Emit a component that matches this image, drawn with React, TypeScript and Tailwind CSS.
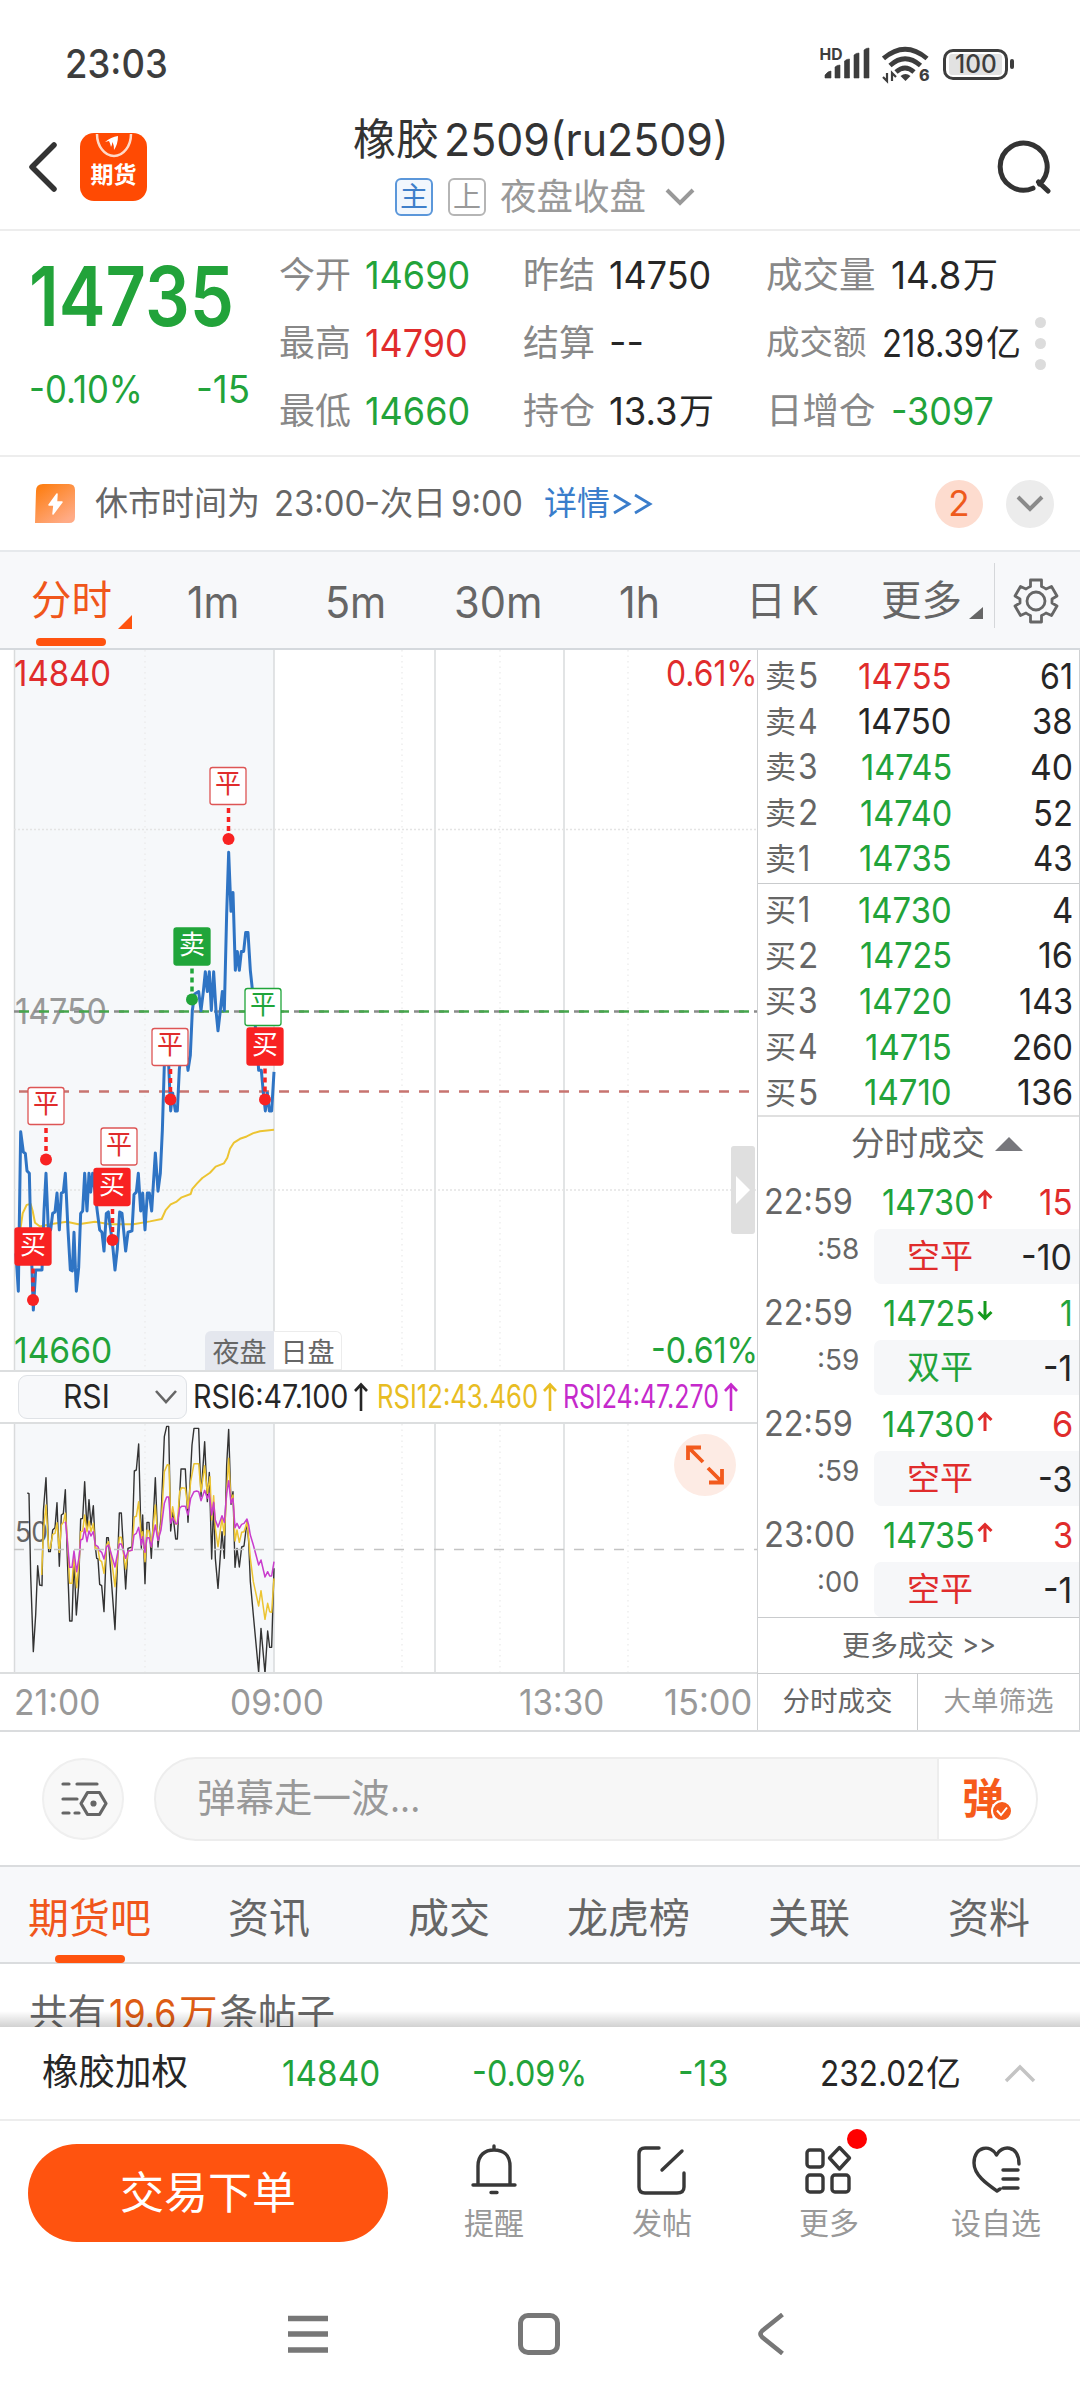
import { useLayoutEffect, useRef, useState } from "react";
import type { ReactNode } from "react";

/** Single-line text condensed or stretched to an exact width. */
function Fit({ w, className = "", children }: { w: number; className?: string; children: ReactNode }) {
  const ref = useRef<HTMLSpanElement>(null);
  const [scale, setScale] = useState(1);
  useLayoutEffect(() => {
    if (ref.current) setScale((w + 3) / ref.current.offsetWidth);
  }, [w, children]);
  return (
    <span className={`block shrink-0 ${className}`} style={{ width: w }}>
      <span
        ref={ref}
        className="block w-max origin-left whitespace-nowrap [font-feature-settings:'case']"
        style={{ transform: `translateX(-1px) scaleX(${scale})` }}
      >
        {children}
      </span>
    </span>
  );
}

const GREEN = "text-[#22a33a]";
const RED = "text-[#e02c2c]";
const DARK = "text-[#262626]";

function StatusBar() {
  return (
    <div className="flex h-[125px] items-center pl-[66px] text-[#3d3d3d]">
      <Fit w={100} className="mt-[3px] text-[40px] font-medium">23:03</Fit>
      <svg className="ml-[654px] mt-[3px]" width="54" height="36" viewBox="0 0 54 36" fill="#3d3d3d">
        <text x="-0.5" y="13.5" fontSize="16" fontWeight="700" fontFamily="Inter" textLength="23" lengthAdjust="spacingAndGlyphs">HD</text>
        <path d="M5 32v-3q3-4 6-4v7zM15 32V21q2-2 5-2v13zM24.500 32V15q2-2 5-2v19zM34 32V9q2-2 5-2v25zM44 32V4q2-2 5-2v30z" stroke="#3d3d3d" strokeWidth="0.6" />
      </svg>
      <svg className="ml-[8px] mt-[5px]" width="48" height="38" viewBox="0 0 48 38" fill="none" stroke="#3d3d3d" strokeWidth="4.800">
        <path d="M1.500 12.500Q23 -6 45 12.500M8 19.500Q23 6 38.500 19.500M14 26Q23 18 32 26" />
        <path d="M23.500 35l-5-5q5-4 10 0z" fill="#3d3d3d" stroke="none" />
        <path d="M5 27v8l-4-4M10 35v-8l4 4" strokeWidth="2.200" />
        <text x="37" y="35" fontSize="16" fontWeight="800" fontFamily="Inter" fill="#3d3d3d" stroke="none">6</text>
      </svg>
      <div className="ml-[13px] mt-[3px] flex h-[31px] w-[65px] items-center justify-center rounded-[10px] border-[3px] border-[#3d3d3d]">
        <div className="flex h-[21px] w-[53px] items-center justify-center rounded-[3px] bg-[#e2e2e2]">
          <Fit w={39} className="text-[25px] font-medium">100</Fit>
        </div>
      </div>
      <div className="ml-[2px] mt-[3px] h-[10px] w-[4px] rounded bg-[#3d3d3d]" />
    </div>
  );
}

function Header() {
  return (
    <header className="flex h-[106px] border-b-2 border-[#ededed]">
      <svg className="ml-[26px] mt-[14px]" width="34" height="56" viewBox="0 0 34 56" fill="none" stroke="#333" strokeWidth="5.500" strokeLinecap="round" strokeLinejoin="round">
        <path d="M28 6L6 28L28 50" />
      </svg>
      <div className="ml-[20px] mt-[8px] flex h-[68px] w-[67px] flex-col items-center rounded-[14px] bg-[#ff4a03]">
        <svg width="40" height="26" viewBox="0 0 40 26" fill="none">
          <path d="M3 0A17 22 0 0 0 37 0" stroke="#ffd9c8" strokeWidth="2.500" transform="translate(0 1)" />
          <path d="M11 9Q17 4 24 3Q24 11 20 17Q20 12 18.500 9Q18 12 17 14Q16 10 15 8z" fill="#fff" />
        </svg>
        <span className="mt-[5px] text-[23px] font-bold text-white">期货</span>
      </div>
      <div className="ml-[206px] flex w-[374px] flex-col">
        <div className="-mt-[4px] flex h-[40px] items-center pb-[4px] text-[43px] text-[#333]">
          <span>橡胶</span>
          <Fit w={282} className="ml-[6px] text-[45px]">2509(ru2509)</Fit>
        </div>
        <div className="ml-[42px] mt-[17px] flex h-[38px] items-center">
          <div className="flex size-[38px] items-center justify-center rounded-[6px] border-2 border-[#5b97da] bg-[#f2f7fd] text-[28px] text-[#3f7fca]">主</div>
          <div className="ml-[15px] flex size-[38px] items-center justify-center rounded-[6px] border-2 border-[#b5b5b5] text-[28px] text-[#999]">上</div>
          <span className="ml-[14px] whitespace-nowrap text-[36.500px] text-[#999]">夜盘收盘</span>
          <svg className="ml-[18px] shrink-0" width="32" height="20" viewBox="0 0 32 20" fill="none" stroke="#999" strokeWidth="4">
            <path d="M3 3L16 16L29 3" />
          </svg>
        </div>
      </div>
      <svg className="ml-[269px] mt-[14px]" width="58" height="58" viewBox="0 0 58 58" fill="none" stroke="#333" strokeWidth="5" strokeLinecap="round">
        <path d="M37 49.200A23.500 23.500 0 1 1 43.500 45M42.500 43L52 52" />
      </svg>
    </header>
  );
}

type Stat = { label: string; w: number; value: string; unit?: string; tone: string };
const STATS: Stat[][] = [
  [
    { label: "今开", value: "14690", w: 102, tone: GREEN },
    { label: "昨结", value: "14750", w: 99, tone: DARK },
    { label: "成交量", value: "14.8", unit: "万", w: 67, tone: DARK },
  ],
  [
    { label: "最高", value: "14790", w: 100, tone: RED },
    { label: "结算", value: "--", w: 32, tone: DARK },
    { label: "成交额", value: "218.39", unit: "亿", w: 99, tone: DARK },
  ],
  [
    { label: "最低", value: "14660", w: 102, tone: GREEN },
    { label: "持仓", value: "13.3", unit: "万", w: 65, tone: DARK },
    { label: "日增仓", value: "-3097", w: 100, tone: GREEN },
  ],
];

function Quote() {
  return (
    <section className="flex h-[226px] border-b-2 border-[#ededed]">
      <div className="ml-[30px] w-[249px]">
        <Fit w={202} className={`mt-[25px] text-[82px] font-semibold ${GREEN}`}>14735</Fit>
        <div className={`mt-[32px] flex text-[38px] ${GREEN}`}>
          <Fit w={111}>-0.10%</Fit>
          <Fit w={51} className="ml-[56px]">-15</Fit>
        </div>
      </div>
      <div className="mt-[10px] w-[750px]">
        {STATS.map((row, r) => (
          <div key={r} className="grid h-[68px] grid-cols-[244px_243px_1fr]">
            {row.map((s, c) => (
              <div key={s.label} className="flex items-center whitespace-nowrap">
                <span className={`text-[#888] ${r === 1 && c === 2 ? "w-[117px] text-[33.500px]" : c === 2 ? "w-[126px] text-[36.500px]" : "w-[87px] text-[36px]"}`}>
                  {s.label}
                </span>
                <Fit w={s.w} className={`text-[38px] ${s.tone}`}>{s.value}</Fit>
                {s.unit && <span className={`ml-[4px] text-[35px] ${s.tone}`}>{s.unit}</span>}
              </div>
            ))}
          </div>
        ))}
      </div>
      <div className="ml-[6px] mt-[86px] flex flex-col gap-[10px]">
        <i className="size-[11px] rounded-full bg-[#dcdcdc]" />
        <i className="size-[11px] rounded-full bg-[#dcdcdc]" />
        <i className="size-[11px] rounded-full bg-[#dcdcdc]" />
      </div>
    </section>
  );
}

function Notice() {
  return (
    <section className="flex h-[95px] items-center border-b-2 border-[#e6e9ec] pl-[35px] text-[33px] text-[#666]">
      <svg width="40" height="39" viewBox="0 0 40 39">
        <defs>
          <linearGradient id="bolt" x1="0" y1="0" x2="0.700" y2="1">
            <stop offset="0" stopColor="#fd7a08" />
            <stop offset="1" stopColor="#ffab86" />
          </linearGradient>
        </defs>
        <path d="M8 0H34Q40 0 40 6V33Q40 39 34 39H0L1 7Q1 0 8 0z" fill="url(#bolt)" />
        <path d="M22 10L14 21H19L18 30L27 18H21.500z" fill="#fff" stroke="#fff" strokeWidth="1.500" strokeLinejoin="round" />
      </svg>
      <span className="ml-[20px]">休市时间为</span>
      <Fit w={88} className="ml-[15px] text-[35px]">23:00</Fit>
      <Fit w={13} className="ml-[2px]">-</Fit>
      <span className="ml-[2px]">次日</span>
      <Fit w={69} className="ml-[6px] text-[35px]">9:00</Fit>
      <span className="ml-[23px] text-[#3a7dcb]">详情</span>
      <svg className="ml-[3px]" width="40" height="26" viewBox="0 0 40 26" fill="none" stroke="#3a7dcb" strokeWidth="2.800">
        <path d="M1 4L16 13L1 22M22 4L37 13L22 22" />
      </svg>
      <div className="ml-[282px] flex size-[48px] items-center justify-center rounded-full bg-[#fddccf] text-[35px] text-[#ee5a1c]">2</div>
      <div className="ml-[23px] flex size-[48px] items-center justify-center rounded-full bg-[#ececec]">
        <svg width="28" height="18" viewBox="0 0 28 18" fill="none" stroke="#8a8a8a" strokeWidth="4">
          <path d="M2 2L14 14L26 2" />
        </svg>
      </div>
    </section>
  );
}

function PeriodTabs() {
  return (
    <nav className="flex h-[98px] border-b-2 border-[#d5d9dd] bg-[#f7f8fa] text-[44px] text-[#666]">
      <div className="relative ml-[31px] w-[101px] pt-[29px] text-[40.500px] text-[#f0561b]">
        分时
        <svg className="absolute left-[87px] top-[63px]" width="14" height="14">
          <path d="M14 0V14H0z" fill="#ff530f" />
        </svg>
        <div className="absolute left-[5px] top-[86px] h-[8px] w-[70px] rounded bg-[#ff530f]" />
      </div>
      <Fit w={49} className="ml-[56px] pt-[28px]">1m</Fit>
      <Fit w={58} className="ml-[89px] pt-[28px]">5m</Fit>
      <Fit w={85} className="ml-[71px] pt-[28px]">30m</Fit>
      <Fit w={38} className="ml-[80px] pt-[28px]">1h</Fit>
      <span className="ml-[88px] pt-[29px] text-[40px]">日</span>
      <Fit w={25} className="ml-[6px] pt-[29px] text-[40px]">K</Fit>
      <span className="ml-[64px] pt-[29px] text-[40.500px]">更多</span>
      <svg className="ml-[7px] mt-[55px]" width="14" height="12">
        <path d="M14 0V12H0z" fill="#666" />
      </svg>
      <div className="ml-[11px] mt-[11px] h-[65px] w-px bg-[#d5d7da]" />
      <svg className="ml-[18px] mt-[26px]" width="46" height="46" viewBox="-23 -23 46 46" fill="none" stroke="#666" strokeWidth="2.800" strokeLinejoin="round">
        <circle r="9" />
        <path d="M-5.500 -21H5.500V-14.500Q8 -13.500 10 -12L15.500 -14.500L21 -5L16 -2V2L21 5L15.500 14.500L10 12Q8 13.500 5.500 14.500V21H-5.500V14.500Q-8 13.500 -10 12L-15.500 14.500L-21 5L-16 2V-2L-21 -5L-15.500 -14.500L-10 -12Q-8 -13.500 -5.500 -14.500z" />
      </svg>
    </nav>
  );
}

const PRICE =
  "48,1300 55,1380 62,1042 70,1085 76,1088 81,1125 88,1130 92,1250 100,1420 107,1335 126,1335 132,1210 138,1130 145,1250 152,1250 158,1215 165,1212 171,1172 178,1250 184,1172 190,1170 196,1130 204,1250 211,1335 217,1337 222,1255 229,1380 236,1330 242,1215 248,1210 254,1130 261,1210 267,1130 272,1170 278,1130 285,1170 292,1212 299,1250 306,1255 312,1295 319,1215 325,1212 333,1255 339,1290 345,1335 352,1290 359,1212 366,1215 377,1295 384,1255 396,1252 402,1175 409,1170 415,1130 422,1210 428,1172 435,1250 442,1172 448,1172 455,1210 466,1087 474,1168 481,1130 487,1040 493,900 500,850 506,900 512,998 518,960 526,998 532,998 538,910 545,870 552,850 558,870 564,912 571,880 577,785 584,750 596,745 603,785 610,745 616,703 622,745 628,703 634,785 641,703 648,785 654,828 661,785 667,745 673,785 680,580 686,450 693,575 699,535 706,700 712,660 718,700 724,660 731,660 737,620 744,620 751,700 757,740 765,810 772,870 776,912 784,912 790,960 796,998 802,960 808,998 815,998 822,915";
const AVERAGE =
  "50,1330 60,1255 68,1215 80,1197 92,1195 98,1210 105,1235 120,1243 150,1238 200,1233 235,1238 285,1233 330,1238 400,1238 450,1232 485,1227 497,1208 512,1196 530,1190 545,1181 572,1174 577,1163 592,1151 607,1140 630,1129 647,1116 672,1109 682,1097 690,1078 702,1065 720,1057 740,1052 760,1045 780,1041 822,1038";
const RSI6 =
  "82,234 87,236 92,480 100,710 107,600 113,452 119,510 126,512 130,290 138,188 146,410 151,410 158,345 165,338 171,263 178,454 184,300 190,296 196,224 202,430 209,618 216,618 222,430 229,600 236,510 242,312 248,310 254,200 261,345 267,254 273,330 280,272 286,395 290,430 294,432 299,508 305,512 312,590 320,368 325,368 330,440 345,644 358,294 364,294 377,522 384,400 396,396 403,168 409,165 416,87 424,400 428,300 435,506 441,322 447,322 454,430 466,188 474,396 483,310 493,65 500,34 506,34 512,348 518,290 527,372 532,372 543,162 556,162 564,322 576,90 582,40 596,40 603,245 614,80 622,260 628,172 635,432 641,265 646,430 654,520 666,350 673,430 680,150 686,43 693,268 699,230 705,457 711,400 718,456 725,396 732,393 741,320 746,380 751,500 760,600 776,772 783,640 795,775 803,648 809,697 815,697 822,460";
const RSI12 =
  "125,480 130,350 138,270 146,400 151,400 158,358 165,355 171,323 178,412 184,330 190,322 196,295 202,370 209,505 216,505 222,420 230,518 238,430 242,350 248,348 254,300 261,350 267,318 273,350 280,325 286,400 294,400 299,435 305,440 312,475 320,390 325,380 330,400 345,515 358,367 364,367 377,462 384,410 396,405 403,306 409,304 416,260 424,370 428,350 435,440 441,346 447,348 454,396 466,270 474,376 483,330 493,170 502,149 507,150 512,320 518,275 527,327 532,327 539,230 545,218 556,220 564,280 572,200 582,146 596,146 603,230 614,152 622,235 630,185 635,315 641,242 646,340 654,395 666,310 673,360 680,230 686,130 693,262 699,240 705,378 711,345 718,382 725,352 732,350 741,322 746,370 751,430 760,500 776,573 783,527 795,613 803,565 809,590 815,592 822,490";
const RSI24 =
  "194,325 197,322 209,457 216,457 222,408 230,470 238,420 242,375 248,372 254,340 261,380 267,348 273,363 280,350 286,390 294,395 299,407 305,412 312,432 320,395 326,390 345,456 358,387 364,387 377,430 384,408 396,406 402,360 409,355 416,337 424,390 428,365 435,412 441,368 447,368 454,395 466,330 474,376 483,345 493,265 500,246 506,246 512,325 518,308 527,326 532,326 539,280 545,274 556,274 564,300 572,250 582,230 590,228 596,230 603,257 614,226 622,250 628,235 635,300 641,262 646,315 654,336 666,302 673,322 680,235 686,197 693,265 699,250 705,338 711,325 718,340 725,328 732,325 741,312 746,330 751,360 760,390 776,450 783,435 795,486 803,470 809,483 815,483 822,440";

type Mark = { text: string; x: number; y: number; color: string; solid: boolean; dotX?: number; dotY?: number };
const R = "#f82222";
const MARKS: Mark[] = [
  { text: "平", x: 228, y: 117, color: R, solid: false, dotX: 228.5, dotY: 189 },
  { text: "卖", x: 192, y: 277.5, color: "#20a53a", solid: true, dotX: 192, dotY: 349.500 },
  { text: "平", x: 263, y: 338, color: "#20a53a", solid: false },
  { text: "平", x: 170, y: 378, color: R, solid: false, dotX: 170.5, dotY: 449.500 },
  { text: "买", x: 265, y: 377.5, color: R, solid: true, dotX: 265, dotY: 449.500 },
  { text: "平", x: 46, y: 437, color: R, solid: false, dotX: 46, dotY: 509.500 },
  { text: "平", x: 119, y: 477.5, color: R, solid: false },
  { text: "买", x: 112, y: 518, color: R, solid: true, dotX: 112.5, dotY: 590 },
  { text: "买", x: 33, y: 577.5, color: R, solid: true, dotX: 33, dotY: 650 },
];

function Grid({ h }: { h: number }) {
  return (
    <>
      <rect x="14" y="0" width="260" height={h} fill="#f6f8fa" />
      {[145, 402, 500, 628].map((x) => (
        <line key={x} x1={x} x2={x} y1="0" y2={h} stroke="#e9e9e9" strokeWidth="1.200" strokeDasharray="1.500 4" />
      ))}
      {[14.5, 274, 435, 564].map((x) => (
        <line key={x} x1={x} x2={x} y1="0" y2={h} stroke="#d9dbdc" strokeWidth="1.500" />
      ))}
    </>
  );
}

function PriceChart() {
  return (
    <div className="relative h-[722px] w-[757px] border-b-2 border-[#dcdedf]">
      <svg className="block" width="757" height="720" viewBox="0 0 757 720">
        <Grid h={720} />
        <path d="M14 179.500H757M14 540H757" stroke="#e4e4e4" strokeWidth="1.500" strokeDasharray="2 2" />
        <text x="15" y="374" fontSize="36" fontFamily="Inter" fill="#999" textLength="92" lengthAdjust="spacingAndGlyphs">14750</text>
        <path d="M14 361.500H757" stroke="#8c8c8c" strokeWidth="2.500" strokeDasharray="10 10" />
        <path d="M19 361.500H757" stroke="#46a64c" strokeWidth="2.500" strokeDasharray="10 10" />
        <path d="M19 441.500H757" stroke="#c87470" strokeWidth="2.500" strokeDasharray="10 10" />
        <g transform="translate(0 -10) scale(0.33333 0.4719)" fill="none" strokeLinejoin="round">
          <polyline points={AVERAGE} stroke="#ecc432" strokeWidth="2" vectorEffect="non-scaling-stroke" />
          <polyline points={PRICE} stroke="#2f74c4" strokeWidth="3" vectorEffect="non-scaling-stroke" />
        </g>
        {MARKS.filter((m) => m.dotX).map((m, i) => (
          <g key={i}>
            <line x1={m.dotX} x2={m.dotX} y1={m.y + 41} y2={m.dotY} stroke={m.color} strokeWidth="3.500" strokeDasharray="5 4" />
            <circle cx={m.dotX} cy={m.dotY} r="6" fill={m.color} />
          </g>
        ))}
        {MARKS.map((m, i) => (
          <g key={i}>
            <rect x={m.x - 18} y={m.y + 0.5} width="36" height="37" rx="2.500" fill={m.solid ? m.color : "#fff"} stroke={m.solid ? m.color : m.color === R ? "#dd5555" : m.color} strokeWidth="1.300" />
            <text x={m.x} y={m.y + 26} textAnchor="middle" fontSize="26" fontFamily="'Noto Sans CJK SC'" fill={m.solid ? "#fff" : m.color === R ? "#e02c2c" : m.color}>
              {m.text}
            </text>
          </g>
        ))}
      </svg>
      <Fit w={94} className={`absolute left-[15px] top-[5px] text-[36px] ${RED}`}>14840</Fit>
      <Fit w={89} className={`absolute left-[667px] top-[5px] text-[36px] ${RED}`}>0.61%</Fit>
      <Fit w={95} className={`absolute left-[15px] top-[682px] text-[36px] ${GREEN}`}>14660</Fit>
      <Fit w={104} className={`absolute left-[652px] top-[682px] text-[36px] ${GREEN}`}>-0.61%</Fit>
      <div className="absolute bottom-0 left-[205px] flex h-[39px] text-[27px] text-[#666]">
        <div className="flex w-[69px] items-center justify-center rounded-tl-[6px] bg-[#e4e7ee] pt-[3px]">夜盘</div>
        <div className="flex w-[68px] items-center justify-center rounded-tr-[6px] border border-l-0 border-[#ececec] bg-white pt-[3px]">日盘</div>
      </div>
      <div className="absolute left-[731px] top-[496px] flex h-[88px] w-[24px] items-center justify-center rounded-[3px] bg-[#dfdfdf]">
        <svg width="14" height="28">
          <path d="M0 0L14 14L0 28z" fill="#fff" />
        </svg>
      </div>
    </div>
  );
}

function UpArrow({ color }: { color: string }) {
  return (
    <svg width="14" height="30" viewBox="0 0 14 30" fill="none" stroke={color} strokeWidth="2.600">
      <path d="M7 29V3M1 9L7 2.500L13 9" />
    </svg>
  );
}

function RsiChart() {
  return (
    <>
      <div className="flex h-[52px] w-[757px] items-center border-b-2 border-[#dcdedf] text-[32px] text-[#262626]">
        <div className="ml-[18px] flex h-[44px] w-[169px] items-center rounded-[9px] border-[1.500px] border-[#dfe2e6] bg-[#f7f8fa] pl-[45px]">
          <Fit w={44}>RSI</Fit>
          <svg className="ml-[47px]" width="22" height="16" viewBox="0 0 22 16" fill="none" stroke="#666" strokeWidth="2.600">
            <path d="M1 2L11 13L21 2" />
          </svg>
        </div>
        <Fit w={152} className="ml-[7px]">RSI6:47.100</Fit>
        <span className="ml-[8px]"><UpArrow color="#262626" /></span>
        <Fit w={158} className="ml-[10px] text-[#e8bd22]">RSI12:43.460</Fit>
        <span className="ml-[7px]"><UpArrow color="#e8bd22" /></span>
        <Fit w={153} className="ml-[7px] text-[#c529cb]">RSI24:47.270</Fit>
        <span className="ml-[7px]"><UpArrow color="#c529cb" /></span>
      </div>
      <div className="relative h-[250px] w-[757px] border-b-2 border-[#dcdedf]">
        <svg className="block" width="757" height="248" viewBox="0 0 757 248">
          <Grid h={248} />
          <text x="15" y="118" fontSize="28" fontFamily="Inter" fill="#666" textLength="33" lengthAdjust="spacingAndGlyphs">50</text>
          <g transform="translate(0 -9) scale(0.33333)" fill="none" strokeLinejoin="round">
            <polyline points={RSI6} stroke="#333" strokeWidth="1.400" vectorEffect="non-scaling-stroke" />
            <polyline points={RSI12} stroke="#ecc432" strokeWidth="1.500" vectorEffect="non-scaling-stroke" />
            <polyline points={RSI24} stroke="#c93ccd" strokeWidth="1.500" vectorEffect="non-scaling-stroke" />
          </g>
          <path d="M14 125.500H757" stroke="#c4c4c4" strokeWidth="1.500" strokeDasharray="10 10" />
        </svg>
        <div className="absolute left-[674px] top-[10px] flex size-[62px] items-center justify-center rounded-full bg-[#fdebe4]">
          <svg width="38" height="40" viewBox="0 0 38 40" fill="none" stroke="#f25a1d" strokeWidth="3.800">
            <path d="M17 17L3 3M2 15V2.500H15M22 23L36 37M36 24V37.500H23" />
          </svg>
        </div>
      </div>
      <div className="flex h-[56px] w-[757px] items-center pl-[15px] text-[36px] text-[#999]">
        <Fit w={83}>21:00</Fit>
        <Fit w={91} className="ml-[133px]">09:00</Fit>
        <Fit w={82} className="ml-[198px]">13:30</Fit>
        <Fit w={85} className="ml-[63px]">15:00</Fit>
      </div>
    </>
  );
}

type Level = [string, string, string, number, string, string, number];
const ASKS: Level[] = [
  ["卖", "5", "14755", 91, RED, "61", 30],
  ["卖", "4", "14750", 91, DARK, "38", 38],
  ["卖", "3", "14745", 88, GREEN, "40", 40],
  ["卖", "2", "14740", 89, GREEN, "52", 37],
  ["卖", "1", "14735", 90, GREEN, "43", 37],
];
const BIDS: Level[] = [
  ["买", "1", "14730", 91, GREEN, "4", 18],
  ["买", "2", "14725", 89, GREEN, "16", 32],
  ["买", "3", "14720", 90, GREEN, "143", 51],
  ["买", "4", "14715", 84, GREEN, "260", 58],
  ["买", "5", "14710", 85, GREEN, "136", 53],
];

function Levels({ rows }: { rows: Level[] }) {
  return (
    <>
      {rows.map(([side, n, price, pw, tone, qty, qw]) => (
        <div key={side + n} className="flex h-[45.600px] items-center text-[36px]">
          <div className="flex w-[101px] items-center text-[#666]">
            <span className="w-[34px] text-[31px]">{side}</span>
            <Fit w={n === "1" ? 9 : 17} className="text-[35px]">{n}</Fit>
          </div>
          <div className={`flex w-[84px] justify-end ${tone}`}><Fit w={pw}>{price}</Fit></div>
          <div className={`flex w-[121px] justify-end ${DARK}`}><Fit w={qw}>{qty}</Fit></div>
        </div>
      ))}
    </>
  );
}

type Trade = { t: string; tw: number; s: string; price: string; pw: number; up: boolean; qty: string; qw: number; tone: string; kind: string; kindTone: string; d: string; dw: number };
const TRADES: Trade[] = [
  { t: "22:59", tw: 86, s: ":58", price: "14730", pw: 90, up: true, qty: "15", qw: 31, tone: RED, kind: "空平", kindTone: RED, d: "-10", dw: 48 },
  { t: "22:59", tw: 86, s: ":59", price: "14725", pw: 89, up: false, qty: "1", qw: 10, tone: GREEN, kind: "双平", kindTone: GREEN, d: "-1", dw: 26 },
  { t: "22:59", tw: 86, s: ":59", price: "14730", pw: 90, up: true, qty: "6", qw: 18, tone: RED, kind: "空平", kindTone: RED, d: "-3", dw: 31 },
  { t: "23:00", tw: 88, s: ":00", price: "14735", pw: 89, up: true, qty: "3", qw: 17, tone: RED, kind: "空平", kindTone: RED, d: "-1", dw: 26 },
];

function OrderBook() {
  return (
    <aside className="w-[323px] border-x-[1.500px] border-[#cfd1d3] whitespace-nowrap">
      <div className="h-[234px] border-b-[1.500px] border-[#c9cbcd] pl-[7px] pt-[3px]"><Levels rows={ASKS} /></div>
      <div className="h-[233px] border-b-2 border-[#e0e0e0] pl-[7px] pt-[3px]"><Levels rows={BIDS} /></div>
      <div className="flex h-[57px] items-center pb-[3px] pl-[93px] text-[33.500px] text-[#666]">
        分时成交
        <svg className="ml-[10px]" width="28" height="14"><path d="M14 0L28 14H0z" fill="#77777c" /></svg>
      </div>
      <div className="h-[444px] border-b-[1.500px] border-[#c9cbcd]">
        {TRADES.map((t, i) => (
          <div key={i} className="h-[111px]">
            <div className="flex h-[55px] items-center pl-[7px] text-[36px]">
              <div className="w-[117px] text-[#666]"><Fit w={t.tw} className="text-[35px]">{t.t}</Fit></div>
              <div className={`flex w-[91px] justify-end ${GREEN}`}><Fit w={t.pw}>{t.price}</Fit></div>
              <svg className="mb-[4px] ml-[4px]" width="16" height="21" viewBox="0 0 16 21" fill="none" stroke={t.up ? "#e02c2c" : "#14991c"} strokeWidth="3">
                <path d={t.up ? "M8 20V3M1.500 9L8 2.500L14.500 9" : "M8 1V18M1.500 12L8 18.500L14.500 12"} />
              </svg>
              <div className={`flex w-[78px] justify-end ${t.tone}`}><Fit w={t.qw}>{t.qty}</Fit></div>
            </div>
            <div className="flex h-[55px]">
              <div className="flex w-[116px] justify-end pr-[17px] pt-[6px] text-[28px] text-[#666]"><Fit w={39}>{t.s}</Fit></div>
              <div className="flex flex-1 items-center rounded-l-[7px] bg-[#f6f7f9] pl-[33px] text-[36px]">
                <span className={`text-[33px] ${t.kindTone}`}>{t.kind}</span>
                <div className={`flex flex-1 justify-end pr-[9px] ${DARK}`}><Fit w={t.dw}>{t.d}</Fit></div>
              </div>
            </div>
          </div>
        ))}
      </div>
      <div className="flex h-[56px] items-center border-b-[1.500px] border-[#c9cbcd] pl-[84px] text-[28px] text-[#666]">
        更多成交
        <Fit w={31} className="ml-[9px]">&gt;&gt;</Fit>
      </div>
      <div className="flex h-[56px] text-[27.500px] text-[#666]">
        <div className="flex w-[160px] items-center justify-center border-r-[1.500px] border-[#c9cbcd]">分时成交</div>
        <div className="flex flex-1 items-center justify-center text-[#999]">大单筛选</div>
      </div>
    </aside>
  );
}

function Danmu() {
  return (
    <section className="flex h-[135px] items-center border-b-2 border-[#dadcde] pl-[42px]">
      <div className="flex size-[82px] items-center justify-center rounded-full border-2 border-[#efefef] bg-[#f8f8f8]">
        <svg className="ml-[4px]" width="50" height="38" viewBox="0 0 50 38" fill="none" stroke="#666" strokeWidth="3.200" strokeLinecap="round">
          <path d="M3 4H9M17 4H37M3 19H17M3 33H9M15 33H19" />
          <path d="M27.500 12.500H39.500L46 23.500L39.500 34.500H27.500L21 23.500z" strokeLinejoin="round" />
          <circle cx="33.500" cy="23.500" r="1.500" fill="#666" />
        </svg>
      </div>
      <div className="ml-[30px] flex h-[84px] w-[884px] overflow-hidden rounded-full border-2 border-[#ededed] bg-[#f7f7f7]">
        <div className="flex w-[781px] items-center pl-[41px] text-[38.500px] text-[#999]">
          弹幕走一波<Fit w={27} className="ml-[1px]">...</Fit>
        </div>
        <div className="relative flex-1 border-l-2 border-[#ededed] bg-white pl-[23px] pt-[19px] text-[42px] font-bold text-[#f65b1b]">
          弹
          <svg className="absolute left-[51px] top-[40px]" width="24" height="24" viewBox="0 0 24 24" fill="none">
            <circle cx="12" cy="12" r="10" fill="#f65b1b" stroke="#fff" strokeWidth="2" />
            <path d="M7 11.500L11 16L17 8.500" stroke="#fff" strokeWidth="2" />
          </svg>
        </div>
      </div>
    </section>
  );
}

function Community() {
  return (
    <>
      <nav className="flex h-[97px] border-b-2 border-[#dadcde] bg-[#f7f8fa] pl-[28px] pt-[31px] text-[41px] text-[#666]">
        <div className="relative w-[200px] text-[#f0561b]">
          期货吧
          <div className="absolute left-[27px] top-[57px] h-[8px] w-[70px] rounded bg-[#ff530f]" />
        </div>
        <span className="w-[180px]">资讯</span>
        <span className="w-[159px]">成交</span>
        <span className="w-[201px]">龙虎榜</span>
        <span className="w-[180px]">关联</span>
        <span>资料</span>
      </nav>
      <div className="relative flex h-[63px] overflow-hidden pl-[29px] pt-[30px] text-[38.500px] text-[#666]">
        共有
        <Fit w={64} className="ml-[4px] text-[40px] text-[#dd5c14]">19.6</Fit>
        <span className="ml-[5px] text-[#dd5c14]">万</span>
        <span className="ml-[2px]">条帖子</span>
        <div className="absolute inset-x-0 bottom-0 h-[16px] bg-linear-to-b from-[#0000]/0 to-black/18" />
      </div>
    </>
  );
}

function IndexBar() {
  return (
    <div className={`flex h-[94px] items-center border-b-2 border-[#ededed] pl-[42px] text-[36px] ${GREEN}`}>
      <span className={`mb-[2px] w-[241px] text-[36.500px] ${DARK}`}>橡胶加权</span>
      <Fit w={95}>14840</Fit>
      <Fit w={112} className="ml-[95px]">-0.09%</Fit>
      <Fit w={47} className="ml-[94px]">-13</Fit>
      <Fit w={102} className={`ml-[95px] ${DARK}`}>232.02</Fit>
      <span className={`ml-[3px] text-[35px] ${DARK}`}>亿</span>
      <svg className="ml-[43px]" width="32" height="20" viewBox="0 0 32 20" fill="none" stroke="#c4c4c4" strokeWidth="3.500">
        <path d="M2 18L16 4L30 18" />
      </svg>
    </div>
  );
}

function ActionBar() {
  const item = "flex flex-col items-center text-[30px] text-[#999]";
  const svg = { width: 56, height: 56, viewBox: "0 0 56 56", fill: "none", stroke: "#383838", strokeWidth: 3.4, strokeLinecap: "round" as const, strokeLinejoin: "round" as const };
  return (
    <div className="flex h-[151px] pl-[28px] pt-[23px]">
      <div className="flex h-[98px] w-[360px] items-center justify-center rounded-full bg-[#ff530f] text-[44px] text-white">交易下单</div>
      <div className={`${item} ml-[46px] w-[120px] -mt-[2px]`}>
        <svg {...svg}>
          <path d="M28 4V8M12 43V24C12 13 19 8 28 8S44 13 44 24V43M7 43H49M25 50.500H31" />
        </svg>
        <span className="mt-[10px]">提醒</span>
      </div>
      <div className={`${item} ml-[48px] w-[120px] -mt-[2px]`}>
        <svg {...svg}>
          <path d="M25 6H11Q5 6 5 12V45Q5 51 11 51H43Q50 51 50 45V31M48 9L28 28" />
        </svg>
        <span className="mt-[10px]">发帖</span>
      </div>
      <div className={`${item} relative ml-[47px] w-[120px] -mt-[2px]`}>
        <svg {...svg}>
          <rect x="6" y="8" width="16" height="17" rx="3" />
          <rect x="6" y="33" width="16" height="17" rx="3" />
          <rect x="31" y="33" width="17" height="17" rx="3" />
          <path d="M38.500 5.500L48.500 16L38.500 27L28.500 16z" />
        </svg>
        <span className="mt-[10px]">更多</span>
        <i className="absolute left-[78px] top-[-13px] size-[20px] rounded-full bg-[#fe0000]" />
      </div>
      <div className={`${item} ml-[47px] w-[120px] -mt-[2px]`}>
        <svg {...svg}>
          <path d="M51 22C51 2 33 3 28.500 13C23 2 6 4 6 21C6 33 19 42 29 49L32 47M35 28H50M35 37H50M35 46H50" />
        </svg>
        <span className="mt-[10px]">设自选</span>
      </div>
    </div>
  );
}

function SystemNav() {
  return (
    <div className="flex h-[130px] items-start pl-[288px] pt-[41px]">
      <svg width="40" height="42" viewBox="0 0 40 42" stroke="#777" strokeWidth="5.500">
        <path d="M0 5.500H40M0 21H40M0 37H40" />
      </svg>
      <div className="ml-[190px] h-[42px] w-[42px] rounded-[10px] border-[5px] border-[#777]" />
      <svg className="ml-[197px]" width="28" height="42" viewBox="0 0 28 42" fill="none" stroke="#777" strokeWidth="4.500">
        <path d="M25.500 1.500L5 18Q2 21 5 24L25.500 40.500" />
      </svg>
    </div>
  );
}

export default function App() {
  return (
    <div className="h-[2400px] w-[1080px] overflow-hidden bg-white font-['Inter','Noto_Sans_CJK_SC',sans-serif] leading-none [&_*]:leading-none">
      <StatusBar />
      <Header />
      <Quote />
      <Notice />
      <PeriodTabs />
      <main className="flex h-[1082px] border-b-2 border-[#dadcde]">
        <div className="w-[757px]">
          <PriceChart />
          <RsiChart />
        </div>
        <OrderBook />
      </main>
      <Danmu />
      <Community />
      <IndexBar />
      <ActionBar />
      <SystemNav />
    </div>
  );
}
